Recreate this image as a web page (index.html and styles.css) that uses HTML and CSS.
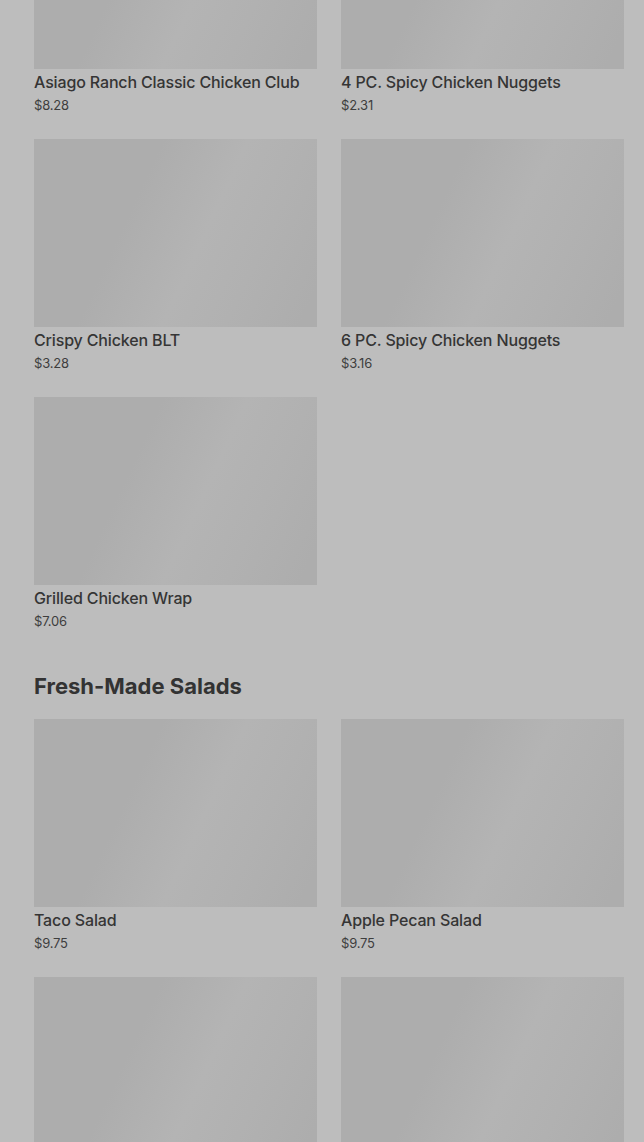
FILE: index.html
```html
<!DOCTYPE html>
<html>
  <head>
    <meta name="viewport" content="width=device-width, initial-scale=1" />
    <link rel="stylesheet" href="styles.css">
  </head>
  <body>
    <div class="menu">
      <section class="section">
        <div class="grid">
          <div class="item">
            <div class="thumb"></div>
            <div class="name">Asiago Ranch Classic Chicken Club</div>
            <div class="price">$8.28</div>
          </div>
          <div class="item">
            <div class="thumb"></div>
            <div class="name">4 PC. Spicy Chicken Nuggets</div>
            <div class="price">$2.31</div>
          </div>
          <div class="item">
            <div class="thumb"></div>
            <div class="name">Crispy Chicken BLT</div>
            <div class="price">$3.28</div>
          </div>
          <div class="item">
            <div class="thumb"></div>
            <div class="name">6 PC. Spicy Chicken Nuggets</div>
            <div class="price">$3.16</div>
          </div>
          <div class="item">
            <div class="thumb"></div>
            <div class="name">Grilled Chicken Wrap</div>
            <div class="price">$7.06</div>
          </div>
        </div>
      </section>

      <section class="section">
        <h2 class="section-title">Fresh-Made Salads</h2>
        <div class="grid">
          <div class="item">
            <div class="thumb"></div>
            <div class="name">Taco Salad</div>
            <div class="price">$9.75</div>
          </div>
          <div class="item">
            <div class="thumb"></div>
            <div class="name">Apple Pecan Salad</div>
            <div class="price">$9.75</div>
          </div>
          <div class="item">
            <div class="thumb"></div>
          </div>
          <div class="item">
            <div class="thumb"></div>
          </div>
        </div>
      </section>
    </div>
  </body>
</html>
```

FILE: styles.css
```css
* {
  box-sizing: border-box;
}

html,
body {
  margin: 0;
  height: 100%;
  overflow: hidden;
}

body {
  background-color: #bdbdbd;
  font-family: Inter, "Noto Sans", sans-serif;
  color: #363636;
}

/* list is scrolled: first row of cards starts above the viewport */
.menu {
  margin-top: -119px;
  padding: 0 20px 0 34px;
}

.grid {
  display: grid;
  grid-template-columns: 283px 283px;
  column-gap: 24px;
  row-gap: 25px;
}

.thumb {
  height: 188px;
  background: linear-gradient(115deg, #adadad 35%, #b4b4b4 58%, #b1b1b1 75%, #adadad 95%);
}

.name {
  margin-top: 3px;
  font-size: 16px;
  line-height: 20px;
  font-weight: 500;
  letter-spacing: -0.15px;
  color: #353535;
  white-space: nowrap;
}

.price {
  margin-top: 4px;
  font-size: 13px;
  line-height: 18px;
  letter-spacing: -0.2px;
  color: #3e3e3e;
}

.section-title {
  margin: 42px 0 19px;
  font-size: 22px;
  line-height: 28px;
  font-weight: 700;
  color: #333;
}
```
